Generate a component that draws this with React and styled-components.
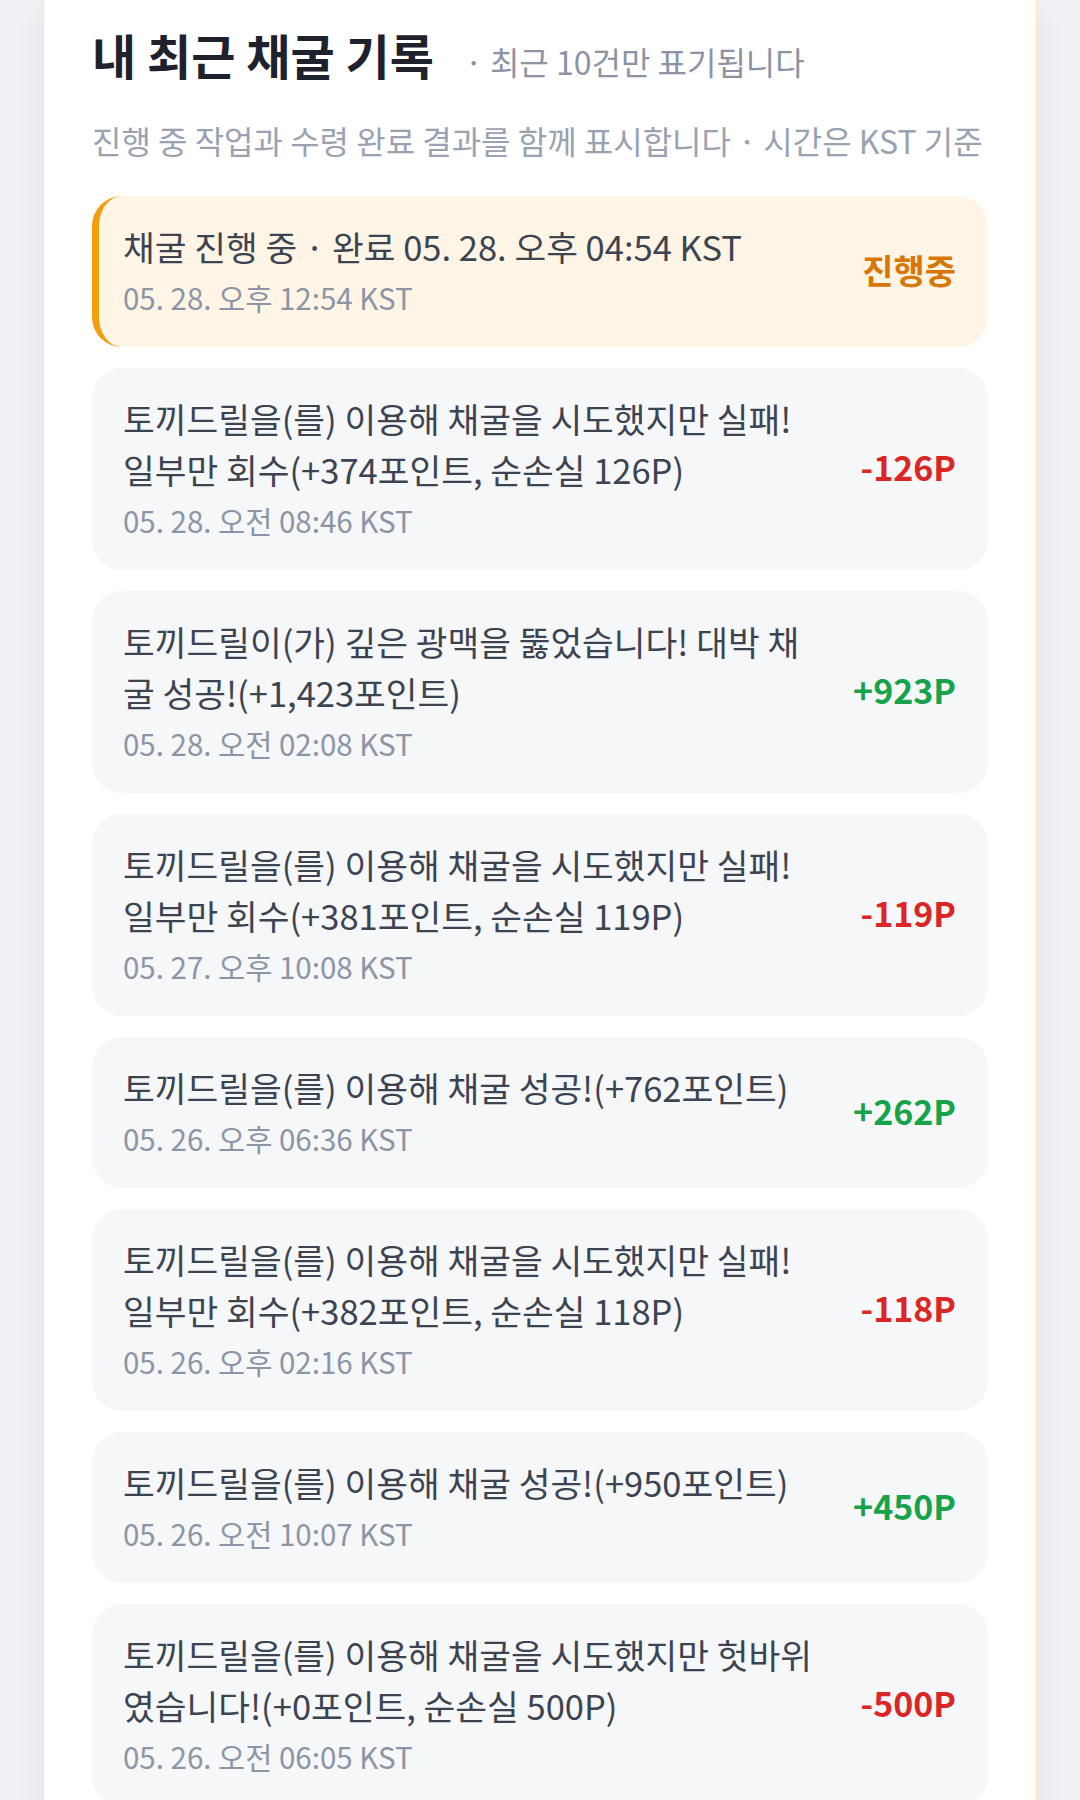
import React from 'react'
import styled, { createGlobalStyle } from 'styled-components'

const GlobalStyle = createGlobalStyle`
  html, body {
    margin: 0;
    padding: 0;
    background: #eff1f5;
  }
  body {
    font-family: "Noto Sans CJK KR", "Noto Sans", sans-serif;
    -webkit-font-smoothing: antialiased;
  }
`

const Panel = styled.section`
  margin: 0 43px;
  min-height: 1800px;
  background: #ffffff;
  border: 1px solid #fde6bd;
  border-top: none;
  padding: 24px 48px 40px;
  box-shadow: 0 10px 30px rgba(30, 41, 59, 0.06);
`

const TitleRow = styled.div`
  display: flex;
  align-items: baseline;
  gap: 31px;
`

const Title = styled.h2`
  margin: 0;
  font-size: 48px;
  line-height: 60px;
  font-weight: 700;
  color: #1d222c;
`

const Note = styled.span`
  font-size: 32px;
  color: #8b93a5;
`

const Description = styled.p`
  margin: 34px 0 0;
  font-size: 32px;
  line-height: 45px;
  color: #9aa2b1;
  white-space: nowrap;
`

const List = styled.ul`
  list-style: none;
  margin: 33px 0 0;
  padding: 0;
  display: flex;
  flex-direction: column;
  gap: 21px;
`

const Card = styled.li`
  display: flex;
  align-items: center;
  gap: 40px;
  border-radius: 30px;
  padding: 25px 32px 30px 31px;
  background: ${p => (p.$active ? '#fff5e6' : '#f6f7f9')};
  border-left: ${p => (p.$active ? '7px solid #f59e0b' : 'none')};
  padding-left: ${p => (p.$active ? '24px' : '31px')};
`

const Body = styled.div`
  flex: 1;
  min-width: 0;
`

const Message = styled.div`
  font-size: 34.5px;
  line-height: 51px;
  color: #3d4451;
`

const Time = styled.div`
  margin-top: 5px;
  font-size: 29.5px;
  line-height: 40px;
  color: #8c95a6;
`

const Amount = styled.div`
  flex: none;
  font-size: 34px;
  font-weight: 700;
  color: ${p => p.$color};
`

const tones = {
  pending: '#d97706',
  gain: '#16a34a',
  loss: '#dc2626',
}

const records = [
  { active: true, text: '채굴 진행 중 · 완료 05. 28. 오후 04:54 KST', time: '05. 28. 오후 12:54 KST', amount: '진행중', tone: 'pending' },
  { text: '토끼드릴을(를) 이용해 채굴을 시도했지만 실패! 일부만 회수(+374포인트, 순손실 126P)', time: '05. 28. 오전 08:46 KST', amount: '-126P', tone: 'loss' },
  { text: '토끼드릴이(가) 깊은 광맥을 뚫었습니다! 대박 채굴 성공!(+1,423포인트)', time: '05. 28. 오전 02:08 KST', amount: '+923P', tone: 'gain' },
  { text: '토끼드릴을(를) 이용해 채굴을 시도했지만 실패! 일부만 회수(+381포인트, 순손실 119P)', time: '05. 27. 오후 10:08 KST', amount: '-119P', tone: 'loss' },
  { text: '토끼드릴을(를) 이용해 채굴 성공!(+762포인트)', time: '05. 26. 오후 06:36 KST', amount: '+262P', tone: 'gain' },
  { text: '토끼드릴을(를) 이용해 채굴을 시도했지만 실패! 일부만 회수(+382포인트, 순손실 118P)', time: '05. 26. 오후 02:16 KST', amount: '-118P', tone: 'loss' },
  { text: '토끼드릴을(를) 이용해 채굴 성공!(+950포인트)', time: '05. 26. 오전 10:07 KST', amount: '+450P', tone: 'gain' },
  { text: '토끼드릴을(를) 이용해 채굴을 시도했지만 헛바위였습니다!(+0포인트, 순손실 500P)', time: '05. 26. 오전 06:05 KST', amount: '-500P', tone: 'loss' },
]

function App() {
  return (
    <>
      <GlobalStyle />
      <Panel>
        <TitleRow>
          <Title>내 최근 채굴 기록</Title>
          <Note>· 최근 10건만 표기됩니다</Note>
        </TitleRow>
        <Description>진행 중 작업과 수령 완료 결과를 함께 표시합니다 · 시간은 KST 기준</Description>
        <List>
          {records.map((r, i) => (
            <Card key={i} $active={r.active}>
              <Body>
                <Message>{r.text}</Message>
                <Time>{r.time}</Time>
              </Body>
              <Amount $color={tones[r.tone]}>{r.amount}</Amount>
            </Card>
          ))}
        </List>
      </Panel>
    </>
  )
}

export default App
